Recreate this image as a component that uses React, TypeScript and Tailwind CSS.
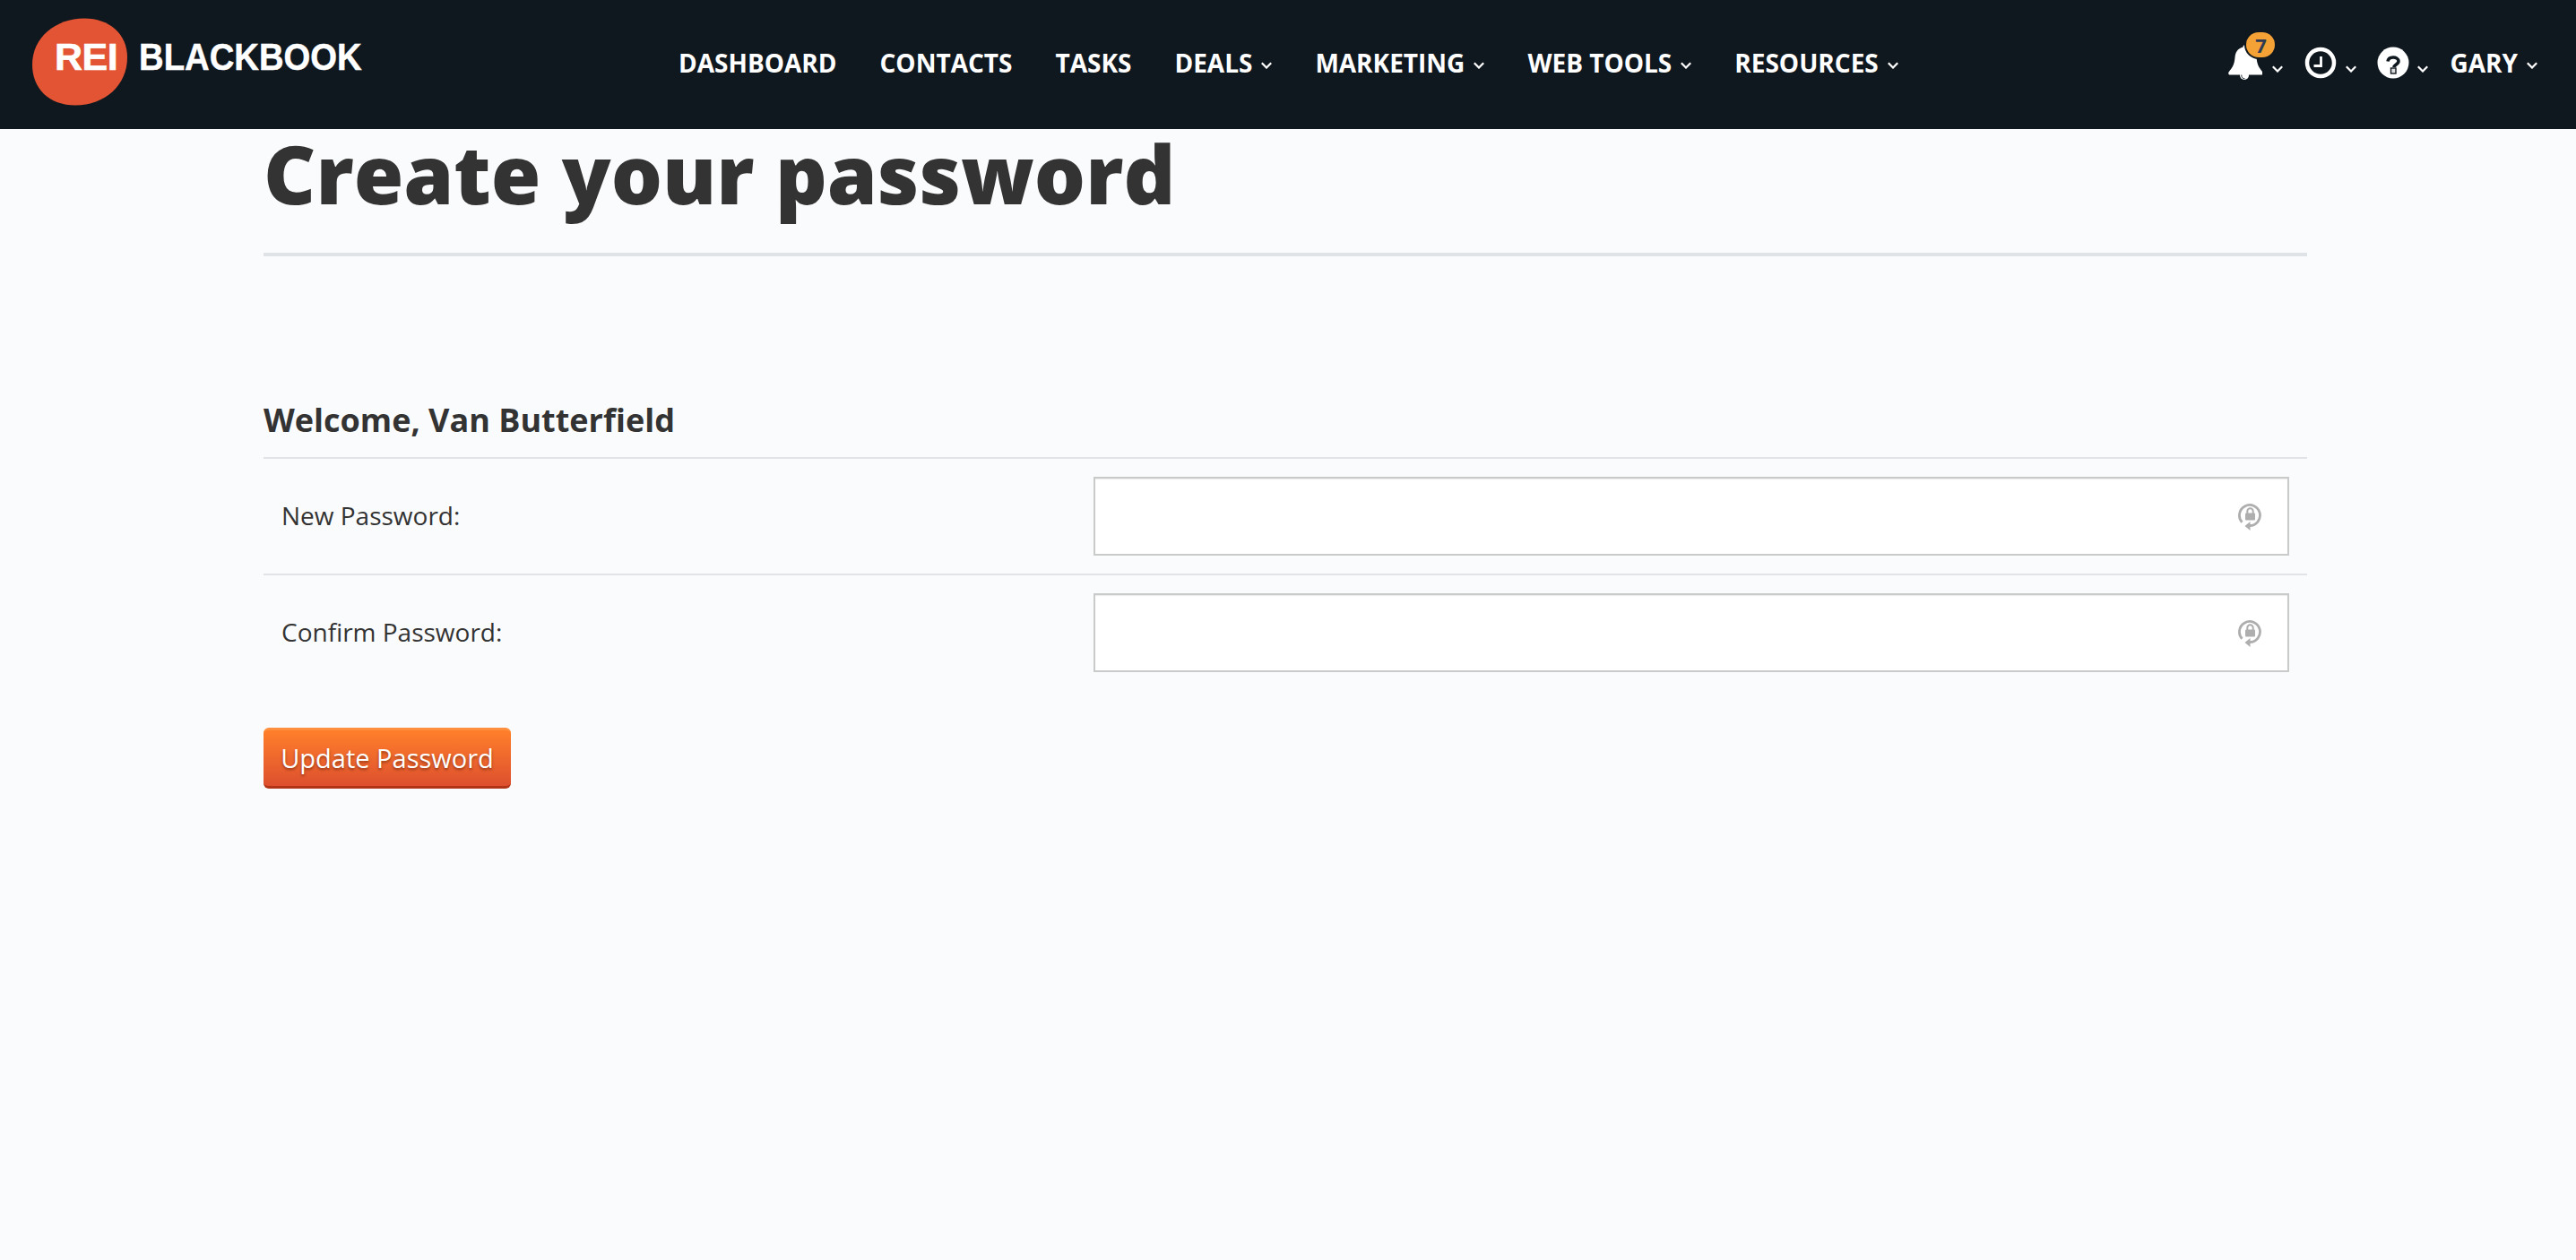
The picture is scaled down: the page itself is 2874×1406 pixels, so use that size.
const navItems = [
  { label: "DASHBOARD" },
  { label: "CONTACTS" },
  { label: "TASKS" },
  { label: "DEALS", menu: true },
  { label: "MARKETING", menu: true },
  { label: "WEB TOOLS", menu: true },
  { label: "RESOURCES", menu: true },
];

function Chevron({ className = "" }: { className?: string }) {
  return (
    <svg viewBox="0 0 12 8" className={`h-[8px] w-[12px] shrink-0 ${className}`} fill="none">
      <path d="M.8 1.200 6 6.500l5.200-5.300" stroke="#fff" strokeWidth="2.200" />
    </svg>
  );
}

function Logo() {
  return (
    <div className="relative ml-[36px] mt-[20px] h-[98px] w-[370px] shrink-0">
      <svg viewBox="0 0 107 98" className="absolute left-0 top-0 h-[98px] w-[107px]">
        <path
          d="M58 .5C86 .5 106 18 106 44c0 31-25 53.500-58 53.500C19 97.500 0 79 0 52 0 22 26 .5 58 .5Z"
          fill="#e25433"
        />
      </svg>
      <span className="absolute left-[25px] top-[19px] origin-left text-[43px] font-bold leading-[48px] tracking-[-0.5px] text-white [-webkit-text-stroke:0.6px_white] [font-family:'Liberation_Sans',sans-serif]">
        REI
      </span>
      <span className="absolute left-[119px] top-[19px] origin-left scale-x-[0.89] text-[43px] font-bold leading-[48px] text-white [-webkit-text-stroke:0.5px_white] [font-family:'Liberation_Sans',sans-serif]">
        BLACKBOOK
      </span>
    </div>
  );
}

function BellIcon() {
  return (
    <svg viewBox="0 0 38 40" className="h-[40px] w-[38px] shrink-0">
      <path
        d="M19 0c-1.500 0-2.500 1-2.500 2.500C10.500 4 8 8.500 7.500 14c-.7 8-2.500 11-7 16.500-.6 1.200-.2 3 1.500 3h35c1.700 0 2.100-1.800 1.500-3-4.500-5.500-6.300-8.500-7-16.500-.5-5.500-3-10-9-11.500C21.500 1 20.500 0 19 0Z"
        fill="#fff"
      />
      <circle cx="18" cy="34" r="5" fill="#fff" />
      <path d="M14.800 33.500a4 4 0 0 0 3.700 4.300" fill="none" stroke="#10181f" strokeWidth="0.9" />
    </svg>
  );
}

function ClockIcon() {
  return (
    <svg viewBox="0 0 36 36" className="h-[36px] w-[36px] shrink-0" fill="none" stroke="#fff">
      <circle cx="18" cy="18" r="15" strokeWidth="4.500" />
      <path d="M18.500 11v10.500h-8" strokeWidth="2.800" />
    </svg>
  );
}

function HelpIcon() {
  return (
    <svg viewBox="0 0 36 36" className="h-[36px] w-[36px] shrink-0">
      <circle cx="18" cy="18" r="17.500" fill="#fff" />
      <path
        d="M12 16.500c.4-3 3-4.500 6-4.500s6 1.700 6 4.300c0 3.700-5 3.500-5 6.700"
        fill="none"
        stroke="#10181f"
        strokeWidth="3.600"
      />
      <rect x="15.500" y="24" width="5.500" height="6" fill="#d9dadb" stroke="#10181f" strokeWidth="1.400" />
    </svg>
  );
}

function LockResetIcon() {
  return (
    <svg viewBox="0 0 26 32" className="h-[32px] w-[26px] shrink-0">
      <path
        d="M4.500 22.800A11.500 11.500 0 1 1 13 26.500"
        fill="none"
        stroke="#aeaeae"
        strokeWidth="2.800"
      />
      <path d="M13.500 22v10L7.500 27Z" fill="#aeaeae" />
      <rect x="8" y="12.500" width="11" height="8" rx="1" fill="#aeaeae" />
      <path d="M10.300 13v-2.500a3.200 3.200 0 0 1 6.400 0V13" fill="none" stroke="#aeaeae" strokeWidth="2" />
    </svg>
  );
}

function PasswordRow({ label, height }: { label: string; height: string }) {
  return (
    <div className={`flex items-center border-b-2 border-[#e2e3e6] last:border-b-0 ${height}`}>
      <label className="ml-[20px] w-[906px] shrink-0 pb-[2px] text-[28px] text-[#333]">{label}</label>
      <div className="flex h-[88px] w-[1334px] items-center justify-end border-2 border-[#c9caca] bg-white pr-[29px] shadow-[inset_0_1px_1px_rgba(0,0,0,0.08)]">
        <LockResetIcon />
      </div>
    </div>
  );
}

export default function App() {
  return (
    <div className="min-h-screen bg-[#fafbfd] [font-family:'Open_Sans',sans-serif]">
      <header className="flex h-[144px] items-start bg-[#10181f] text-white">
        <Logo />
        <nav className="ml-[351px] mt-[52px] flex items-center gap-[48px]">
          {navItems.map((item) => (
            <a key={item.label} className="flex items-center gap-[10px] text-[28px] font-bold leading-[36px]">
              {item.label}
              {item.menu && <Chevron className="mt-[6px]" />}
            </a>
          ))}
        </nav>
        <div className="ml-auto mr-[43px] mt-[50px] flex items-center">
          <div className="relative">
            <BellIcon />
            <span className="absolute left-[20px] top-[-14px] flex h-[28px] w-[32px] items-center justify-center rounded-[14px] bg-[#f4a235] text-[22px] font-bold text-[#2f3b52] ring-2 ring-[#10181f]">
              7
            </span>
          </div>
          <Chevron className="ml-[11px] mt-[14px]" />
          <div className="ml-[24px]">
            <ClockIcon />
          </div>
          <Chevron className="ml-[10px] mt-[14px]" />
          <div className="ml-[23px]">
            <HelpIcon />
          </div>
          <Chevron className="ml-[9px] mt-[14px]" />
          <span className="ml-[24px] text-[28px] font-bold leading-[36px]">GARY</span>
          <Chevron className="ml-[10px] mt-[6px]" />
        </div>
      </header>

      <main className="ml-[294px] w-[2280px]">
        <h1 className="h-[142px] border-b-4 border-[#dfe2e6] text-[90px] font-extrabold leading-[98px] text-[#333]">
          Create your password
        </h1>
        <h2 className="mt-[153px] h-[73px] border-b-2 border-[#e2e3e6] text-[36px] font-bold leading-[60px] text-[#333]">
          Welcome, Van Butterfield
        </h2>
        <div>
          <PasswordRow label="New Password:" height="h-[130px]" />
          <PasswordRow label="Confirm Password:" height="h-[128px]" />
        </div>
        <button className="mt-[42px] h-[68px] w-[276px] rounded-[6px] border-b-[3px] border-t-[3px] border-b-[#b23417] border-t-[#ff8f3f] bg-gradient-to-b from-[#ff7f2a] to-[#dd4f2e] text-[29px] font-normal text-white [text-shadow:0_2px_3px_rgba(90,30,10,0.6)]">
          Update Password
        </button>
      </main>
    </div>
  );
}
